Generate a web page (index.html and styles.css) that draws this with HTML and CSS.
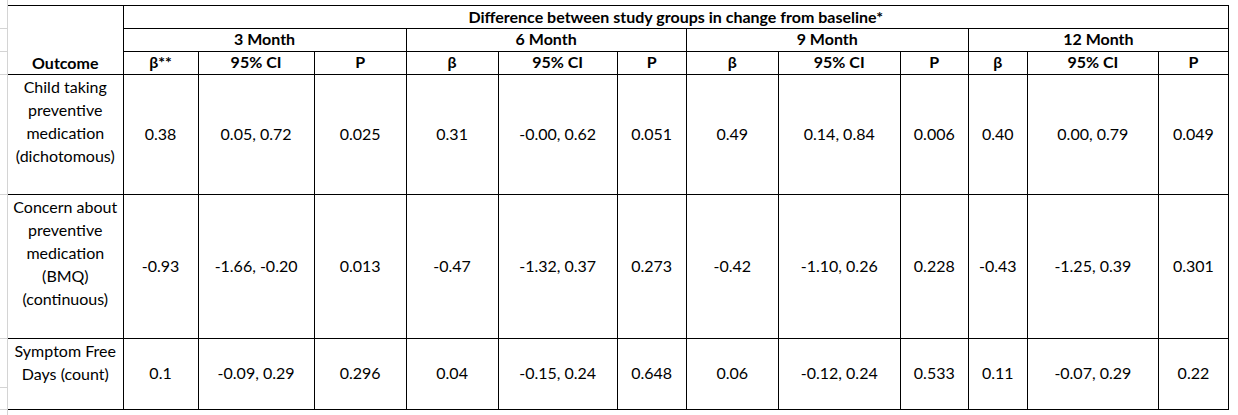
FILE: index.html
```html
<!DOCTYPE html>
<html lang="en">
<head>
<meta charset="utf-8">
<title>Difference between study groups</title>
<link rel="stylesheet" href="styles.css">
</head>
<body>
<div class="sheet">
  <div class="gutter">
    <div class="g g1"></div>
    <div class="g g2"></div>
    <div class="g g3"></div>
    <div class="g g4"></div>
    <div class="g g5"></div>
    <div class="g g6"></div>
    <div class="g g7"></div>
  </div>
  <table class="results">
    <colgroup>
      <col class="c-outcome">
      <col class="w75"><col class="w116"><col class="w92">
      <col class="w92"><col class="w119"><col class="w69">
      <col class="w92"><col class="w122"><col class="w68">
      <col class="w59"><col class="w131"><col class="w70">
    </colgroup>
    <thead>
      <tr class="hrow">
        <th class="outcome-head" rowspan="3">Outcome</th>
        <th class="title" colspan="12">Difference between study groups in change from baseline*</th>
      </tr>
      <tr class="hrow">
        <th colspan="3">3 Month</th>
        <th colspan="3">6 Month</th>
        <th colspan="3">9 Month</th>
        <th colspan="3">12 Month</th>
      </tr>
      <tr class="hrow">
        <th>β**</th><th>95% CI</th><th>P</th>
        <th>β</th><th>95% CI</th><th>P</th>
        <th>β</th><th>95% CI</th><th>P</th>
        <th>β</th><th>95% CI</th><th>P</th>
      </tr>
    </thead>
    <tbody>
      <tr class="r1">
        <td class="outcome"><div class="otext">Child taking preventive medication (dichotomous)</div></td>
        <td>0.38</td><td>0.05, 0.72</td><td>0.025</td>
        <td>0.31</td><td>-0.00, 0.62</td><td>0.051</td>
        <td>0.49</td><td>0.14, 0.84</td><td>0.006</td>
        <td>0.40</td><td>0.00, 0.79</td><td>0.049</td>
      </tr>
      <tr class="r2">
        <td class="outcome"><div class="otext">Concern about preventive medication (BMQ) (continuous)</div></td>
        <td>-0.93</td><td>-1.66, -0.20</td><td>0.013</td>
        <td>-0.47</td><td>-1.32, 0.37</td><td>0.273</td>
        <td>-0.42</td><td>-1.10, 0.26</td><td>0.228</td>
        <td>-0.43</td><td>-1.25, 0.39</td><td>0.301</td>
      </tr>
      <tr class="r3">
        <td class="outcome"><div class="otext">Symptom Free Days (count)</div></td>
        <td>0.1</td><td>-0.09, 0.29</td><td>0.296</td>
        <td>0.04</td><td>-0.15, 0.24</td><td>0.648</td>
        <td>0.06</td><td>-0.12, 0.24</td><td>0.533</td>
        <td>0.11</td><td>-0.07, 0.29</td><td>0.22</td>
      </tr>
    </tbody>
  </table>
</div>
</body>
</html>
```

FILE: styles.css
```css
html, body {
  margin: 0;
  padding: 0;
  background: #ffffff;
}

body {
  font-family: Lato, "Open Sans", "Liberation Sans", sans-serif;
  font-size: 16px;
  color: #000000;
}

.sheet {
  display: flex;
  align-items: flex-start;
}

.gutter {
  width: 7px;
  height: 415px;
  border-right: 1px solid #d4d4d4;
  flex: none;
}

.g { border-bottom: 1px solid #d4d4d4; }
.g1 { height: 28px; }
.g2 { height: 22px; }
.g3 { height: 22px; }
.g4 { height: 119px; }
.g5 { height: 143px; }
.g6 { height: 48px; }
.g7 { height: 21px; }

.results {
  margin-top: 5px;
  border-collapse: collapse;
  table-layout: fixed;
  width: 1221px;
  border-top: 1px solid #000;
  border-right: 1px solid #000;
  border-bottom: 1px solid #000;
}

.c-outcome { width: 115px; }
.w59 { width: 59px; }
.w68 { width: 68px; }
.w69 { width: 69px; }
.w70 { width: 70px; }
.w75 { width: 75px; }
.w92 { width: 92px; }
.w116 { width: 116px; }
.w119 { width: 119px; }
.w122 { width: 122px; }
.w131 { width: 131px; }

.results th,
.results td {
  border: 1px solid #000;
  padding: 0 2px;
  text-align: center;
  line-height: 20px;
  white-space: nowrap;
}

.results th {
  font-weight: 700;
  vertical-align: middle;
  padding-bottom: 2px;
}

.results th.title {
  padding-bottom: 0;
}

.results th.outcome-head,
.results td.outcome {
  border-left: none;
}

.results th.outcome-head {
  vertical-align: bottom;
  padding-bottom: 1px;
}

.hrow { height: 23px; }

.results td {
  vertical-align: middle;
  padding-bottom: 2px;
}

.results td.outcome {
  vertical-align: top;
  white-space: normal;
  padding: 0 2px;
}

.otext {
  line-height: 23px;
}

.r1 { height: 120px; }
.r2 { height: 144px; }
.r3 { height: 71px; }
```
